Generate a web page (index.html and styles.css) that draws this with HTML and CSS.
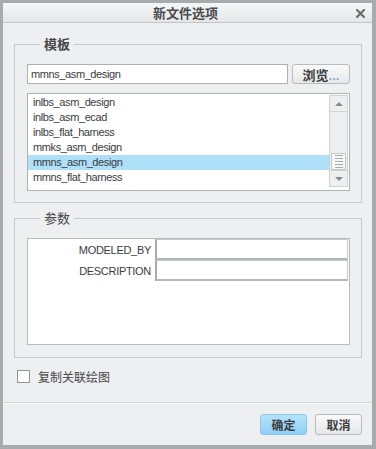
FILE: index.html
```html
<!DOCTYPE html>
<html lang="zh">
<head>
    <meta charset="UTF-8">
    <title>新文件选项</title>
    <link rel="stylesheet" href="styles.css">
</head>
<body>
    <div class="window">
        <header class="title-bar">
            <span class="title">新文件选项</span>
            <svg class="close" width="9" height="9" viewBox="0 0 9 9">
                <path d="M1 1 L8 8 M8 1 L1 8" stroke="#6b6c6e" stroke-width="2.2" stroke-linecap="square"/>
            </svg>
        </header>
        <main class="content">
            <fieldset class="group group-template">
                <legend class="legend-bold">模板</legend>
                <div class="path-row">
                    <input class="path-input" type="text" value="mmns_asm_design">
                    <button class="btn btn-browse">浏览<span class="dots">...</span></button>
                </div>
                <div class="list">
                    <ul class="items">
                        <li>inlbs_asm_design</li>
                        <li>inlbs_asm_ecad</li>
                        <li>inlbs_flat_harness</li>
                        <li>mmks_asm_design</li>
                        <li class="selected">mmns_asm_design</li>
                        <li>mmns_flat_harness</li>
                    </ul>
                    <div class="scrollbar">
                        <div class="sb-btn"><span class="arrow-up"></span></div>
                        <div class="sb-track">
                            <div class="sb-thumb">
                                <span></span><span></span><span></span><span></span><span></span>
                            </div>
                        </div>
                        <div class="sb-btn"><span class="arrow-down"></span></div>
                    </div>
                </div>
            </fieldset>

            <fieldset class="group group-params">
                <legend>参数</legend>
                <div class="params">
                    <div class="param-row">
                        <label class="param-name">MODELED_BY</label>
                        <input class="param-value" type="text">
                    </div>
                    <div class="param-row">
                        <label class="param-name">DESCRIPTION</label>
                        <input class="param-value" type="text">
                    </div>
                </div>
            </fieldset>

            <label class="check-row">
                <span class="checkbox"></span>
                <span>复制关联绘图</span>
            </label>
        </main>
        <footer class="footer">
            <button class="btn btn-ok">确定</button>
            <button class="btn btn-cancel">取消</button>
        </footer>
    </div>
</body>
</html>
```

FILE: styles.css
```css
html, body {
    margin: 0;
    padding: 0;
}

body {
    width: 376px;
    height: 449px;
    font-family: "Liberation Sans", "Noto Sans CJK SC", sans-serif;
    font-size: 11px;
    color: #3a3c40;
}

.window {
    box-sizing: border-box;
    width: 376px;
    height: 449px;
    border-style: solid;
    border-color: #a8aaac;
    border-width: 3px 4px 4px 3px;
    background: #eeeff1;
    display: flex;
    flex-direction: column;
}

.title-bar {
    height: 19px;
    border-bottom: 1px solid #c2c4c6;
    background: linear-gradient(#f5f6f7, #e5e6e8);
    display: flex;
    align-items: center;
    justify-content: center;
    position: relative;
}

.title {
    font-family: "Noto Sans CJK SC", sans-serif;
    font-weight: bold;
    font-size: 13px;
    color: #4a4b4e;
    margin-left: -4px;
}

.close {
    position: absolute;
    right: 7px;
    top: 6px;
}

.content {
    flex: 1;
    padding: 13px 10px 0 11px;
}

.group {
    margin: 0;
    border: 1px solid #c8cacc;
    padding: 12px 11px 11px 12px;
}

.group legend {
    font-family: "Noto Sans CJK SC", sans-serif;
    font-size: 13px;
    line-height: 16px;
    color: #454649;
    padding: 0 4px;
    margin-left: 13px;
}

.legend-bold {
    font-weight: bold;
}

.group-params {
    margin-top: 7px;
    padding-bottom: 12px;
}

.path-row {
    display: flex;
    gap: 4px;
}

.path-input {
    box-sizing: border-box;
    width: 261px;
    height: 20px;
    margin: 0;
    border: 1px solid #aeb0b2;
    padding: 0 3px;
    font-family: "Liberation Sans", sans-serif;
    font-size: 11px;
    letter-spacing: -0.4px;
    color: #3a3c40;
    background: #fff;
}

.btn {
    box-sizing: border-box;
    margin: 0;
    height: 21px;
    border: 1px solid #b9bbbd;
    border-radius: 3px;
    background: linear-gradient(#fafafa, #e6e7e8);
    font-family: "Noto Sans CJK SC", sans-serif;
    font-weight: bold;
    font-size: 12px;
    color: #3c3d40;
    padding: 0;
    cursor: pointer;
}

.btn-browse {
    width: 58px;
    height: 20px;
    font-size: 13px;
}

.dots {
    font-weight: normal;
    color: #5a8cc8;
    letter-spacing: 0;
}

.list {
    box-sizing: border-box;
    margin-top: 9px;
    height: 98px;
    border: 1px solid #b0b2b4;
    background: #fff;
    display: flex;
    padding: 1px 1px 0 0;
}

.items {
    list-style: none;
    margin: 0;
    padding: 0;
    flex: 1;
}

.items li {
    height: 15px;
    line-height: 15px;
    padding-left: 5px;
    letter-spacing: -0.4px;
    color: #3a3c40;
}

.items .selected {
    background: #aee0fa;
}

.scrollbar {
    box-sizing: border-box;
    width: 19px;
    height: 92px;
    border: 1px solid #d0d2d4;
    background: #eeeff1;
    display: flex;
    flex-direction: column;
}

.sb-btn {
    height: 15px;
    border-bottom: 1px solid #d0d2d4;
    display: flex;
    align-items: center;
    justify-content: center;
}

.sb-btn:last-child {
    border-bottom: none;
    border-top: 1px solid #d0d2d4;
}

.arrow-up {
    width: 0;
    height: 0;
    border-left: 4px solid transparent;
    border-right: 4px solid transparent;
    border-bottom: 4px solid #8a8c8e;
}

.arrow-down {
    width: 0;
    height: 0;
    border-left: 4px solid transparent;
    border-right: 4px solid transparent;
    border-top: 4px solid #8a8c8e;
}

.sb-track {
    flex: 1;
    display: flex;
    flex-direction: column;
    justify-content: flex-end;
}

.sb-thumb {
    box-sizing: border-box;
    height: 17px;
    margin: 0 1px;
    border: 1px solid #c4c6c8;
    background: #f8f8f9;
    display: flex;
    flex-direction: column;
    align-items: center;
    justify-content: center;
    gap: 2px;
}

.sb-thumb span {
    width: 8px;
    height: 1px;
    background: #a8aaac;
}

.params {
    box-sizing: border-box;
    height: 107px;
    border: 1px solid #b8babc;
    background: #fff;
    padding-right: 1px;
}

.param-row {
    display: flex;
    align-items: center;
}

.param-name {
    width: 123px;
    text-align: right;
    padding-right: 4px;
    letter-spacing: -0.3px;
    color: #3a3c40;
}

.param-value {
    box-sizing: border-box;
    flex: 1;
    height: 21px;
    margin: 0;
    border: 1px solid #c6c8ca;
    border-left: 2px solid #a8aaac;
    border-bottom: 2px solid #b4b6b8;
    background: #fff;
}

.check-row {
    display: flex;
    align-items: center;
    gap: 8px;
    margin-top: 10px;
    margin-left: 3px;
    font-family: "Noto Sans CJK SC", sans-serif;
    font-size: 12px;
    color: #444548;
}

.checkbox {
    box-sizing: border-box;
    width: 13px;
    height: 13px;
    border: 1px solid #929496;
    background: #fff;
}

.footer {
    box-sizing: border-box;
    height: 43px;
    flex-shrink: 0;
    border-top: 1px solid #d2d4d6;
    box-shadow: inset 0 1px 0 #fff;
    display: flex;
    justify-content: flex-end;
    align-items: flex-start;
    gap: 8px;
    padding: 11px 10px 0 0;
}

.btn-ok {
    width: 47px;
    border-color: #88c6ec;
    background: linear-gradient(#b6e2fb, #8fd0f6);
}

.btn-cancel {
    width: 47px;
}
```
